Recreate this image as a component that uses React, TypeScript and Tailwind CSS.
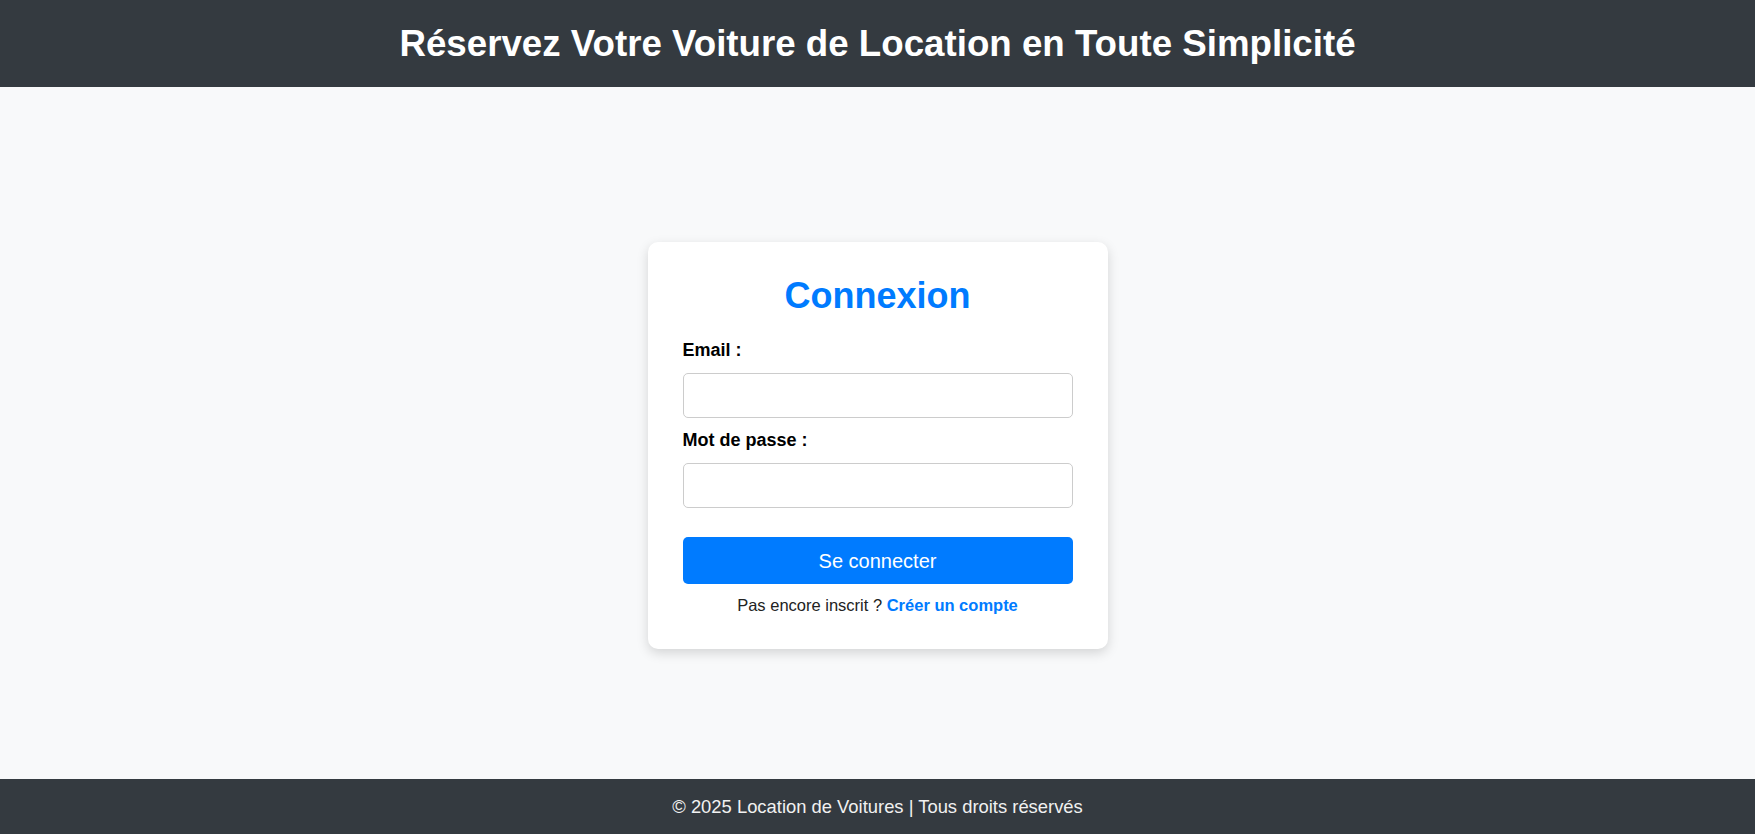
import { useState } from 'react';

const FONT = { fontFamily: '"Liberation Sans", Arial, sans-serif' };

export default function App() {
  const [email, setEmail] = useState('');
  const [password, setPassword] = useState('');

  return (
    <div className="min-h-screen flex flex-col bg-[#f8f9fa]" style={FONT}>
      {/* Header */}
      <header className="h-[87px] shrink-0 flex items-center justify-center bg-[#343a40]">
        <h1 className="text-[36.7px] leading-[42px] font-bold text-white">
          Réservez Votre Voiture de Location en Toute Simplicité
        </h1>
      </header>

      {/* Login card */}
      <main className="flex-1 flex items-center justify-center pt-[25px]">
        <div className="w-[460px] bg-white rounded-[10px] px-[35px] pt-[33px] pb-[34px] shadow-[0_4px_12px_rgba(0,0,0,0.15)]">
          <h2 className="text-[36px] leading-[42px] font-bold text-[#007bff] text-center">Connexion</h2>

          <form className="mt-[23px] flex flex-col" onSubmit={(e) => e.preventDefault()}>
            <label htmlFor="email" className="text-[18px] leading-[21px] font-bold text-black">
              Email :
            </label>
            <input
              id="email"
              type="email"
              value={email}
              onChange={(e) => setEmail(e.target.value)}
              className="mt-[12px] h-[45px] w-full rounded-[5px] border border-[#cccccc] bg-white px-3 text-[16px] outline-none"
            />

            <label htmlFor="password" className="mt-[12px] text-[18px] leading-[21px] font-bold text-black">
              Mot de passe :
            </label>
            <input
              id="password"
              type="password"
              value={password}
              onChange={(e) => setPassword(e.target.value)}
              className="mt-[12px] h-[45px] w-full rounded-[5px] border border-[#cccccc] bg-white px-3 text-[16px] outline-none"
            />

            <button
              type="submit"
              className="mt-[29px] h-[47px] w-full rounded-[5px] bg-[#007bff] text-white text-[20px]"
            >
              Se connecter
            </button>
          </form>

          <p className="mt-[12px] text-center text-[16.5px] leading-[19px] text-[#222]">
            Pas encore inscrit ?{' '}
            <a href="#" className="font-bold text-[#007bff]">
              Créer un compte
            </a>
          </p>
        </div>
      </main>

      {/* Footer */}
      <footer className="h-[55px] shrink-0 flex items-center justify-center bg-[#343a40]">
        <p className="text-[18.4px] leading-[21px] text-[#f1f1f1]">© 2025 Location de Voitures | Tous droits réservés</p>
      </footer>
    </div>
  );
}
